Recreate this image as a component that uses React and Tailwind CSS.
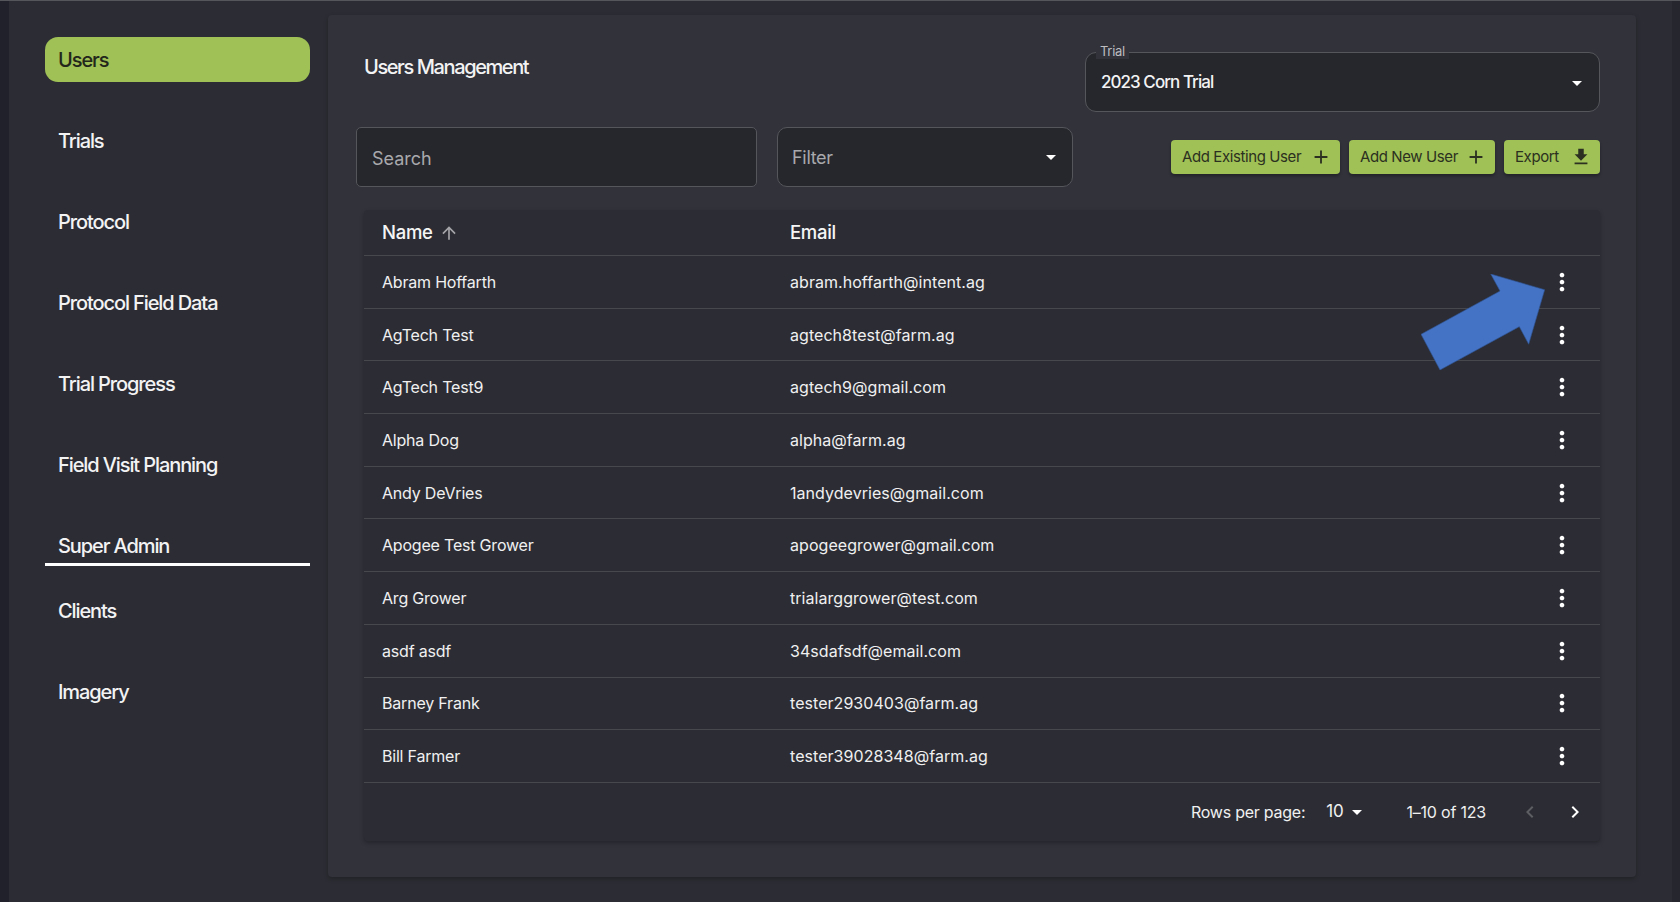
import { Fragment } from 'react';

const font = { fontFamily: 'Inter, "Open Sans", sans-serif' };

const NAV_TOP = ['Trials', 'Protocol', 'Protocol Field Data', 'Trial Progress', 'Field Visit Planning'];

const USERS = [
  ['Abram Hoffarth', 'abram.hoffarth@intent.ag'],
  ['AgTech Test', 'agtech8test@farm.ag'],
  ['AgTech Test9', 'agtech9@gmail.com'],
  ['Alpha Dog', 'alpha@farm.ag'],
  ['Andy DeVries', '1andydevries@gmail.com'],
  ['Apogee Test Grower', 'apogeegrower@gmail.com'],
  ['Arg Grower', 'trialarggrower@test.com'],
  ['asdf asdf', '34sdafsdf@email.com'],
  ['Barney Frank', 'tester2930403@farm.ag'],
  ['Bill Farmer', 'tester39028348@farm.ag'],
];

const Icon = ({ d, className }) => (
  <svg viewBox="0 0 24 24" fill="currentColor" className={className} aria-hidden="true">
    <path d={d} />
  </svg>
);

const CARET = 'M7 10l5 5 5-5z';
const PLUS = 'M19 13h-6v6h-2v-6H5v-2h6V5h2v6h6v2z';
const DOWNLOAD = 'M5 20h14v-2H5v2zM19 9h-4V3H9v6H5l7 7 7-7z';
const KEBAB = 'M12 8c1.1 0 2-.9 2-2s-.9-2-2-2-2 .9-2 2 .9 2 2 2zm0 2c-1.1 0-2 .9-2 2s.9 2 2 2 2-.9 2-2-.9-2-2-2zm0 6c-1.1 0-2 .9-2 2s.9 2 2 2 2-.9 2-2-.9-2-2-2z';
const SORT_UP = 'M4 12l1.41 1.41L11 7.83V20h2V7.83l5.58 5.59L20 12l-8-8-8 8z';
const PREV = 'M15.41 7.41 14 6l-6 6 6 6 1.41-1.41L10.83 12z';
const NEXT = 'M10 6 8.59 7.41 13.17 12l-4.58 4.59L10 18l6-6z';

const NavItem = ({ label, active }) => (
  <div
    className={`h-[45px] flex items-center px-[13px] text-[20px] font-medium tracking-[-1.1px] ${
      active ? 'bg-[#9fc156] rounded-[13px] text-[#23261a]' : 'text-[#f3f3f4]'
    }`}
  >
    {label}
  </div>
);

const ActionButton = ({ label, icon, className }) => (
  <button
    className={`h-[34px] rounded-[4px] bg-[#9fc156] shadow-[0_2px_3px_rgba(0,0,0,0.3)] flex items-center justify-between pl-[11px] pr-[8px] text-[15px] tracking-[-0.4px] text-[#2c3020] ${className}`}
  >
    <span>{label}</span>
    <Icon d={icon} className="w-[22px] h-[22px]" />
  </button>
);

const UserRow = ({ name, email }) => (
  <div className="h-[52.7px] border-b border-[#47484d] flex items-center text-[16px] text-[#f0f0f1]">
    <div className="w-[426px] pl-[18px] tracking-[-0.2px]">{name}</div>
    <div className="flex-1 tracking-[0.05px]">{email}</div>
    <Icon d={KEBAB} className="w-[28px] h-[28px] text-white mr-[24px]" />
  </div>
);

export default function App() {
  return (
    <div className="relative w-[1680px] h-[902px] overflow-hidden flex bg-[#2c2d34] border-t border-[#55565c]" style={font}>
      <div className="w-[9px] bg-[#20212a]" />

      {/* Sidebar */}
      <aside className="w-[319px] pl-[36px] pr-[18px] pt-[36px]">
        <NavItem label="Users" active />
        <div className="mt-[36px] flex flex-col gap-[36px]">
          {NAV_TOP.map((label) => (
            <NavItem key={label} label={label} />
          ))}
        </div>
        <div className="mt-[36px] h-[43px] border-b-[3px] border-white flex items-center px-[13px] pt-[5px] text-[20px] font-medium tracking-[-1.1px] text-[#f3f3f4]">
          Super Admin
        </div>
        <div className="mt-[22px] flex flex-col gap-[36px]">
          <NavItem label="Clients" />
          <NavItem label="Imagery" />
        </div>
      </aside>

      {/* Main panel */}
      <main className="w-[1308px] h-[862px] mt-[14px] bg-[#31323a] rounded-[4px] shadow-[0_2px_4px_rgba(0,0,0,0.25)] px-[28px] pt-[37px]">
        <div className="flex items-start justify-between pr-[8px] pl-[8px]">
          <h1 className="text-[20px] font-medium tracking-[-1.4px] text-[#f3f3f4] leading-[30px]">Users Management</h1>
          <div className="relative w-[515px] h-[60px] bg-[#26272c] border border-[#55565c] rounded-[11px] flex items-center justify-between pl-[15px] pr-[10px] pt-[1px] text-[17px] font-medium tracking-[-0.95px] text-[#f3f3f4]">
            <span className="absolute left-[10px] -top-[10px] px-[4px] bg-[#31323a] text-[13px] font-normal tracking-[-0.3px] leading-[16px] text-[#bdbdc0]">Trial</span>
            <span>2023 Corn Trial</span>
            <Icon d={CARET} className="w-[24px] h-[24px] text-white" />
          </div>
        </div>

        <div className="mt-[15px] flex items-start">
          <div className="w-[401px] h-[60px] bg-[#26272c] border border-[#55565c] rounded-[5px] flex items-center pl-[15px] pt-[2px] text-[18px] tracking-[0px] text-[#a9a9ad]">
            Search
          </div>
          <div className="ml-[20px] w-[296px] h-[60px] bg-[#26272c] border border-[#55565c] rounded-[10px] flex items-center justify-between pl-[14px] pr-[9px] text-[18px] tracking-[-0.3px] text-[#a9a9ad]">
            <span>Filter</span>
            <Icon d={CARET} className="w-[24px] h-[24px] text-white" />
          </div>
          <div className="ml-auto mr-[8px] mt-[13px] flex gap-[9px]">
            <ActionButton label="Add Existing User" icon={PLUS} className="w-[169px]" />
            <ActionButton label="Add New User" icon={PLUS} className="w-[146px]" />
            <ActionButton label="Export" icon={DOWNLOAD} className="w-[96px]" />
          </div>
        </div>

        {/* Users table */}
        <div className="mt-[23px] ml-[8px] mr-[8px] h-[631px] bg-[#2c2d34] rounded-[4px] shadow-[0_2px_4px_rgba(0,0,0,0.25)]">
          <div className="h-[46px] border-b border-[#47484d] flex items-center text-[18.5px] font-medium tracking-[-0.3px] text-[#f5f5f6]">
            <div className="w-[426px] pl-[18px] flex items-center gap-[6px]">
              <span>Name</span>
              <Icon d={SORT_UP} className="w-[20px] h-[20px] text-[#a5a5a9]" />
            </div>
            <div>Email</div>
          </div>

          {USERS.map(([name, email]) => (
            <Fragment key={email}>
              <UserRow name={name} email={email} />
            </Fragment>
          ))}

          <div className="h-[58px] flex items-center text-[16px] tracking-[-0.25px] text-[#f0f0f1]">
            <span className="ml-[827px]">Rows per page:</span>
            <span className="ml-[21px] text-[17px]">10</span>
            <Icon d={CARET} className="w-[24px] h-[24px] text-white ml-[2px]" />
            <span className="ml-[37px] tracking-[-0.2px]">1–10 of 123</span>
            <Icon d={PREV} className="w-[24px] h-[24px] text-[#5d5e63] ml-[32px]" />
            <Icon d={NEXT} className="w-[24px] h-[24px] text-white ml-[21px]" />
          </div>
        </div>
      </main>

      <div className="ml-auto w-[8px] bg-[#26272e]" />

      {/* Annotation arrow pointing at the row menu */}
      <svg
        viewBox="0 0 124 96"
        className="absolute left-[1421px] top-[273px] w-[124px] h-[96px]"
        aria-hidden="true"
      >
        <polygon
          points="69.7,0 123.7,15.7 107.7,70.3 98.3,52.7 19,96 0,60.3 79,17"
          fill="#4472c4"
          stroke="#2f528f"
          strokeWidth="0.6"
        />
      </svg>
    </div>
  );
}
